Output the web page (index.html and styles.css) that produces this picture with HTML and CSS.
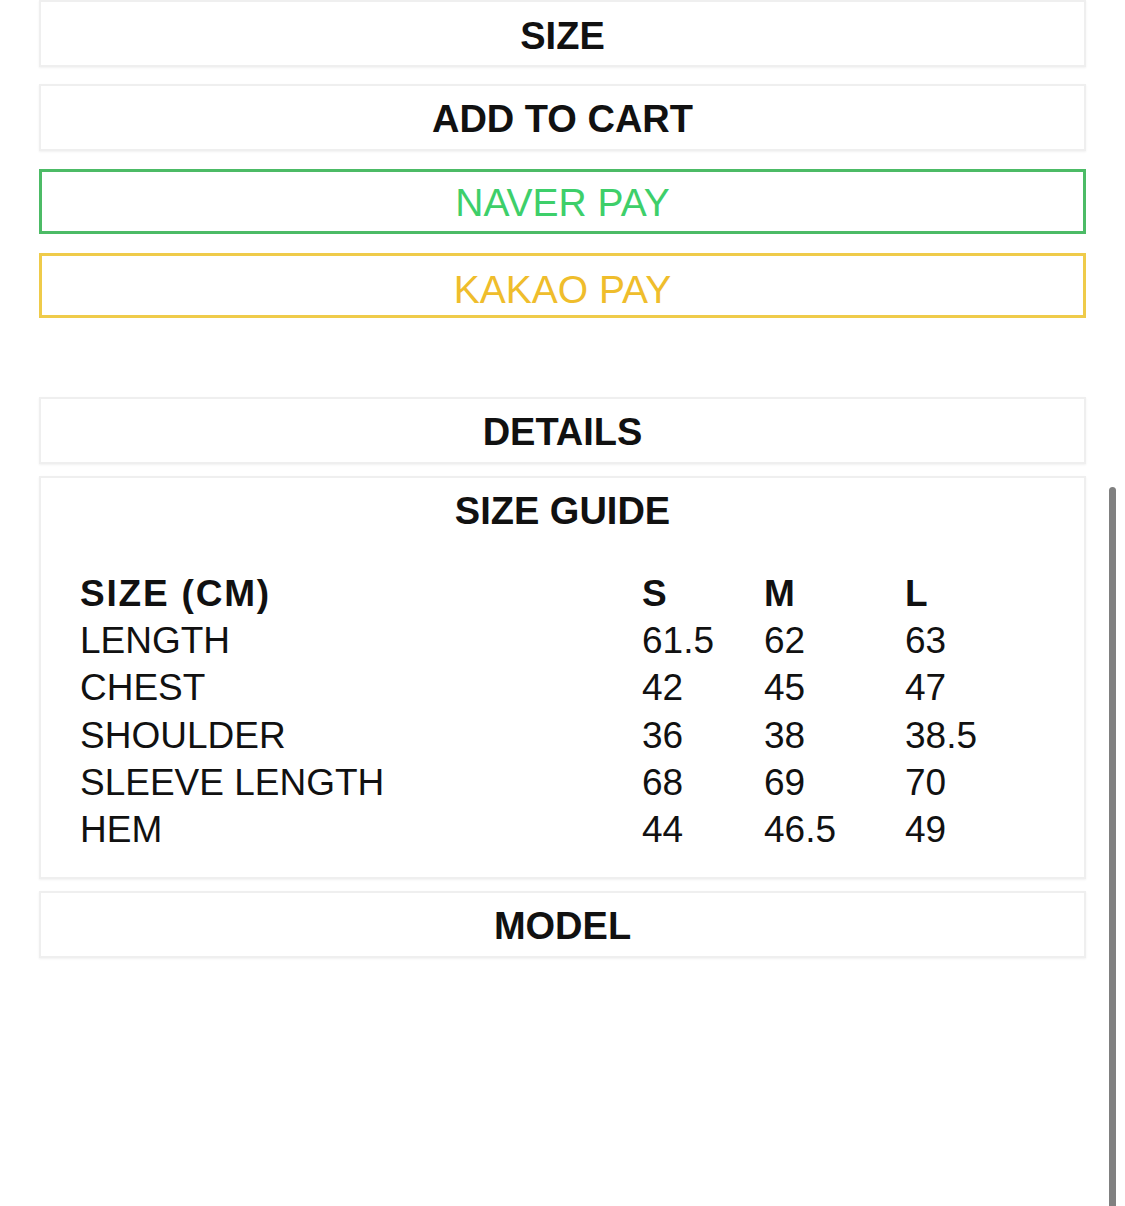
FILE: index.html
```html
<!DOCTYPE html>
<html>
<head>
<meta charset="utf-8">
<link rel="stylesheet" href="styles.css">
</head>
<body>
<div class="page">
  <div class="stack">
    <div class="btn first">SIZE</div>
    <div class="btn">ADD TO CART</div>
    <div class="btn pay naver">NAVER PAY</div>
    <div class="btn pay kakao">KAKAO PAY</div>
  </div>
  <div class="stack info">
    <div class="btn">DETAILS</div>
    <div class="panel">
      <div class="panel-title">SIZE GUIDE</div>
      <div class="table">
        <div class="cell head">SIZE (CM)</div><div class="cell head">S</div><div class="cell head">M</div><div class="cell head">L</div>
        <div class="cell">LENGTH</div><div class="cell">61.5</div><div class="cell">62</div><div class="cell">63</div>
        <div class="cell">CHEST</div><div class="cell">42</div><div class="cell">45</div><div class="cell">47</div>
        <div class="cell">SHOULDER</div><div class="cell">36</div><div class="cell">38</div><div class="cell">38.5</div>
        <div class="cell">SLEEVE LENGTH</div><div class="cell">68</div><div class="cell">69</div><div class="cell">70</div>
        <div class="cell">HEM</div><div class="cell">44</div><div class="cell">46.5</div><div class="cell">49</div>
      </div>
    </div>
    <div class="btn">MODEL</div>
  </div>
</div>
<div class="scrollbar"></div>
</body>
</html>
```
FILE: styles.css
```css
html, body {
  margin: 0;
  padding: 0;
  background: #ffffff;
}
body {
  font-family: "Liberation Sans", Arial, sans-serif;
  color: #111111;
  width: 1125px;
  height: 1206px;
  overflow: hidden;
  position: relative;
}
.page {
  padding: 0 39px;
  width: 1047px;
}
.stack {
  display: flex;
  flex-direction: column;
}
.stack .btn + .btn {
  margin-top: 17px;
}
.stack .pay.naver {
  margin-top: 18px;
}
.stack .pay.kakao {
  margin-top: 19px;
}
.info {
  margin-top: 79px;
  gap: 12px;
}
.info .btn + .btn {
  margin-top: 0;
}
.btn {
  box-sizing: border-box;
  height: 67px;
  border: 2px solid #efefef;
  box-shadow: 0 1px 2px rgba(0, 0, 0, 0.06);
  display: flex;
  align-items: center;
  justify-content: center;
  font-size: 38px;
  font-weight: 700;
  padding-top: 3px;
}
.btn.first {
  padding-top: 6px;
}
.pay {
  height: 65px;
  font-size: 39px;
  font-weight: 400;
  box-shadow: none;
  border-width: 3px;
}
.naver {
  border-color: #4cbb66;
  color: #3ecf6a;
}
.kakao {
  border-color: #efcb4a;
  color: #efbd2c;
  padding-top: 8px;
}
.panel {
  box-sizing: border-box;
  height: 403px;
  border: 2px solid #efefef;
  box-shadow: 0 1px 2px rgba(0, 0, 0, 0.06);
}
.panel-title {
  height: 65px;
  display: flex;
  align-items: center;
  justify-content: center;
  font-size: 38px;
  font-weight: 700;
  padding-top: 2px;
  box-sizing: border-box;
}
.table {
  display: grid;
  grid-template-columns: 562px 122px 141px 1fr;
  padding: 27px 0 0 39px;
}
.cell {
  font-size: 37px;
  line-height: 47.2px;
  height: 47.2px;
}
.head {
  font-weight: 700;
  letter-spacing: 1.8px;
}
.scrollbar {
  position: absolute;
  left: 1109px;
  top: 487px;
  width: 7px;
  height: 740px;
  background: #808080;
  border-radius: 4px;
}
```
